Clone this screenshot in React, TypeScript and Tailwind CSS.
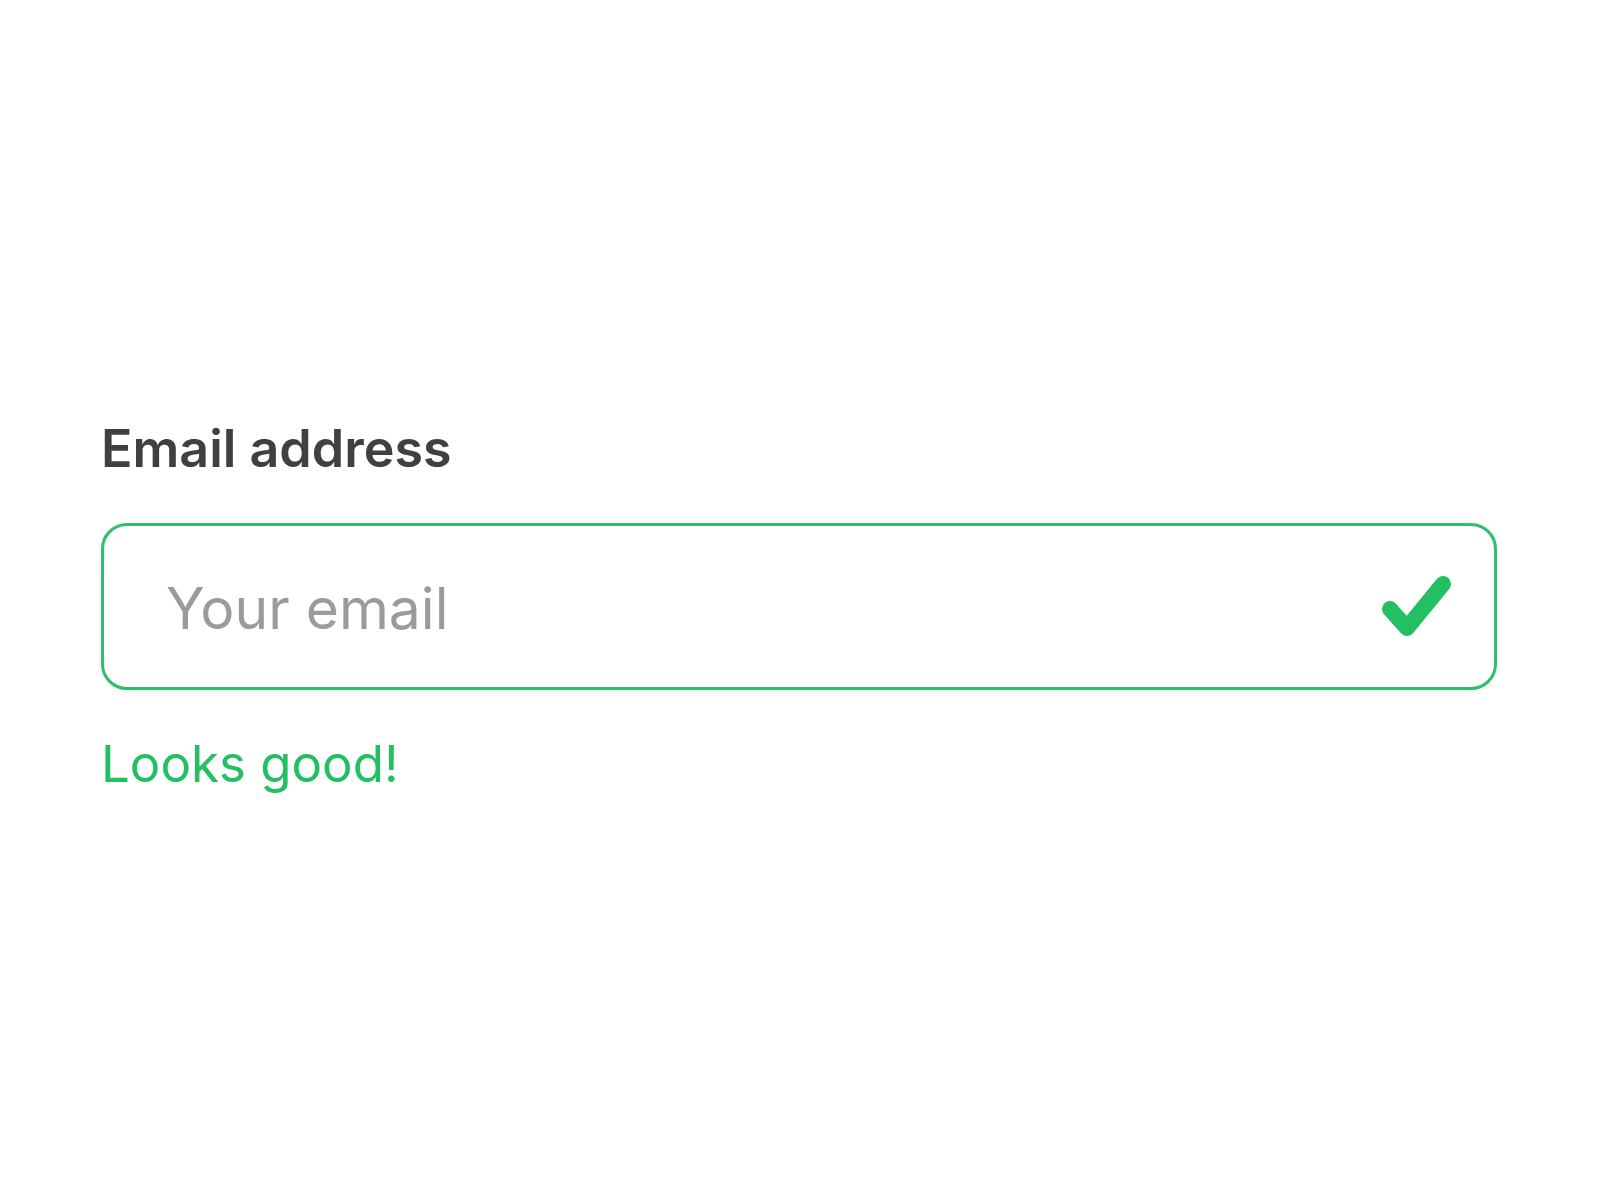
export default function App() {
  return (
    <div className="min-h-[1200px] bg-white pl-[101px] pr-[103px] pt-[419px] font-['Inter',sans-serif]">
      <label htmlFor="email" className="block text-[52px] font-semibold leading-[60px] text-[#404040]">
        Email address
      </label>
      <div className="mt-[44px] flex h-[167px] items-center rounded-[26px] border-[3px] border-[#2dbf6b] bg-white pl-[62px] pr-[41px] shadow-[0_2px_4px_rgba(0,0,0,0.06)]">
        <input
          id="email"
          type="email"
          placeholder="Your email"
          className="min-w-0 flex-1 bg-transparent pt-[4px] text-[57px] text-[#404040] outline-none placeholder:text-[#9b9b9b]"
        />
        <svg width="72" height="66" viewBox="0 0 72 66" fill="none" className="shrink-0">
          <polyline
            points="9,35 26,54 62,10"
            stroke="#22c063"
            strokeWidth="16"
            strokeLinecap="round"
            strokeLinejoin="round"
          />
        </svg>
      </div>
      <p className="mt-[44px] text-[51px] leading-[60px] text-[#22c063]">Looks good!</p>
    </div>
  );
}
